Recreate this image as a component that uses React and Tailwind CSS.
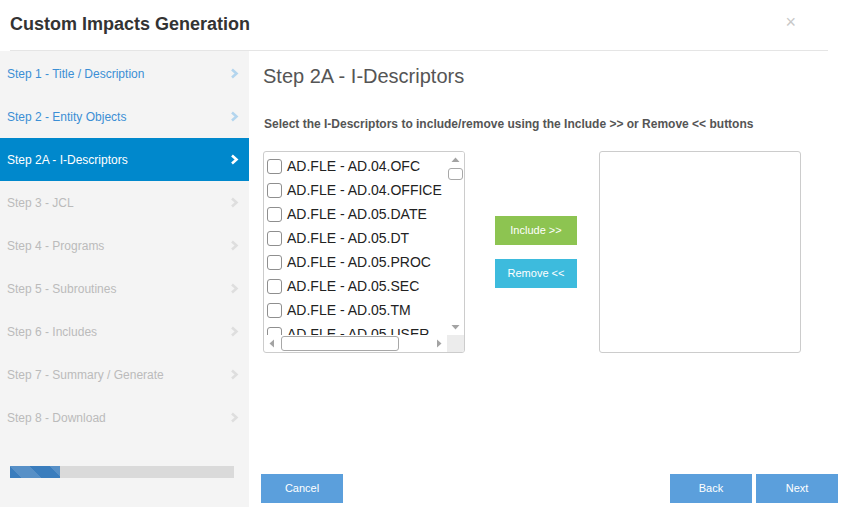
import React from "react";

const steps = [
  { label: "Step 1 - Title / Description", state: "done" },
  { label: "Step 2 - Entity Objects", state: "done" },
  { label: "Step 2A - I-Descriptors", state: "active" },
  { label: "Step 3 - JCL", state: "off" },
  { label: "Step 4 - Programs", state: "off" },
  { label: "Step 5 - Subroutines", state: "off" },
  { label: "Step 6 - Includes", state: "off" },
  { label: "Step 7 - Summary / Generate", state: "off" },
  { label: "Step 8 - Download", state: "off" },
];

const items = [
  "AD.FLE - AD.04.OFC",
  "AD.FLE - AD.04.OFFICE",
  "AD.FLE - AD.05.DATE",
  "AD.FLE - AD.05.DT",
  "AD.FLE - AD.05.PROC",
  "AD.FLE - AD.05.SEC",
  "AD.FLE - AD.05.TM",
  "AD.FLE - AD.05.USER",
];

function Chevron({ color }) {
  return (
    <svg width="9" height="11" viewBox="0 0 9 11" className="shrink-0">
      <polyline points="2,1.5 6.5,5.5 2,9.5" fill="none" stroke={color} strokeWidth="2.6" />
    </svg>
  );
}

export default function App() {
  return (
    <div
      className="w-[843px] h-[507px] bg-white overflow-hidden flex flex-col"
      style={{ fontFamily: '"Liberation Sans", Arial, sans-serif' }}
    >
      {/* Header */}
      <div className="h-[51px] ml-[10px] w-[818px] border-b border-[#e5e5e5] flex items-center justify-between shrink-0">
        <div className="text-[18px] font-bold text-[#333] leading-none -mt-[2px]">Custom Impacts Generation</div>
        <div className="text-[18px] text-[#c8c8c8] leading-none -mt-[7px] mr-[32px]">×</div>
      </div>

      <div className="flex flex-1 min-h-0">
        {/* Sidebar */}
        <div className="w-[249px] bg-[#f4f4f4] flex flex-col pt-[1px] shrink-0">
          {steps.map((s) => {
            const text =
              s.state === "active" ? "text-white" : s.state === "done" ? "text-[#3b8fd5]" : "text-[#bbbbbb]";
            const bg = s.state === "active" ? "bg-[#0088cc]" : "";
            const chev = s.state === "active" ? "#ffffff" : s.state === "done" ? "#b3d5ee" : "#dedede";
            return (
              <div key={s.label} className={`h-[43px] flex items-center justify-between pl-[7px] pr-[10px] ${bg}`}>
                <span className={`text-[12px] ${text}`}>{s.label}</span>
                <Chevron color={chev} />
              </div>
            );
          })}
          <div className="mt-[27px] ml-[10px] w-[224px] h-[12px] bg-[#dadada]">
            <div className="h-full w-[50px] bg-[#3a7dbd] bg-[linear-gradient(45deg,rgba(255,255,255,.15)_25%,transparent_25%,transparent_50%,rgba(255,255,255,.15)_50%,rgba(255,255,255,.15)_75%,transparent_75%,transparent)] bg-[length:40px_40px]" />
          </div>
        </div>

        {/* Main */}
        <div className="flex-1 flex flex-col">
          <div className="pl-[14px] pt-[11px]">
            <div className="text-[20px] text-[#555] leading-[28px]">Step 2A - I-Descriptors</div>
            <div className="mt-[26px] text-[12px] font-bold text-[#555] leading-[16px] pl-[1px]">
              Select the I-Descriptors to include/remove using the Include &gt;&gt; or Remove &lt;&lt; buttons
            </div>

            <div className="mt-[19px] flex items-start">
              {/* List box */}
              <div className="w-[202px] h-[202px] border border-[#cccccc] rounded-[3px] flex flex-col overflow-hidden">
                <div className="flex flex-1 min-h-0">
                  <div className="flex-1 overflow-hidden pl-[3px] pt-[2px]">
                    {items.map((it) => (
                      <div key={it} className="h-[24px] flex items-center whitespace-nowrap">
                        <div className="w-[15px] h-[15px] border border-[#8f8f8f] rounded-[3px] bg-white shrink-0" />
                        <span className="ml-[5px] text-[14px] text-[#222]">{it}</span>
                      </div>
                    ))}
                  </div>
                  <div className="w-[17px] bg-white flex flex-col items-center shrink-0">
                    <svg width="17" height="16" viewBox="0 0 17 16">
                      <polygon points="4.5,10 12.5,10 8.5,5.5" fill="#a3a3a3" />
                    </svg>
                    <div className="w-[15px] h-[12px] border border-[#a8a8a8] rounded-[3px] bg-white" />
                    <div className="flex-1" />
                    <svg width="17" height="16" viewBox="0 0 17 16">
                      <polygon points="4.5,6 12.5,6 8.5,10.5" fill="#a3a3a3" />
                    </svg>
                  </div>
                </div>
                <div className="h-[17px] flex items-center shrink-0">
                  <svg width="17" height="17" viewBox="0 0 17 17" className="shrink-0">
                    <polygon points="10,4.5 10,12.5 5.5,8.5" fill="#a3a3a3" />
                  </svg>
                  <div className="w-[118px] h-[15px] border border-[#a8a8a8] rounded-[3px] bg-white" />
                  <div className="flex-1" />
                  <svg width="17" height="17" viewBox="0 0 17 17" className="shrink-0">
                    <polygon points="7,4.5 7,12.5 11.5,8.5" fill="#a3a3a3" />
                  </svg>
                  <div className="w-[17px] h-[17px] bg-[#ececec] shrink-0" />
                </div>
              </div>

              {/* Buttons */}
              <div className="ml-[30px] mt-[65px] flex flex-col gap-[14px]">
                <div className="w-[82px] h-[29px] bg-[#8dc451] text-white text-[11px] flex items-center justify-center">
                  Include &gt;&gt;
                </div>
                <div className="w-[82px] h-[29px] bg-[#3dbbdd] text-white text-[11px] flex items-center justify-center">
                  Remove &lt;&lt;
                </div>
              </div>

              {/* Right box */}
              <div className="ml-[22px] w-[202px] h-[202px] border border-[#cccccc] rounded-[3px]" />
            </div>
          </div>

          <div className="flex-1" />

          {/* Footer */}
          <div className="flex items-center pl-[12px] pr-[5px] pb-[4px]">
            <div className="w-[82px] h-[29px] bg-[#5b9fdc] text-white text-[11px] flex items-center justify-center">
              Cancel
            </div>
            <div className="flex-1" />
            <div className="w-[82px] h-[29px] bg-[#5b9fdc] text-white text-[11px] flex items-center justify-center">
              Back
            </div>
            <div className="ml-[4px] w-[82px] h-[29px] bg-[#5b9fdc] text-white text-[11px] flex items-center justify-center">
              Next
            </div>
          </div>
        </div>
      </div>
    </div>
  );
}
